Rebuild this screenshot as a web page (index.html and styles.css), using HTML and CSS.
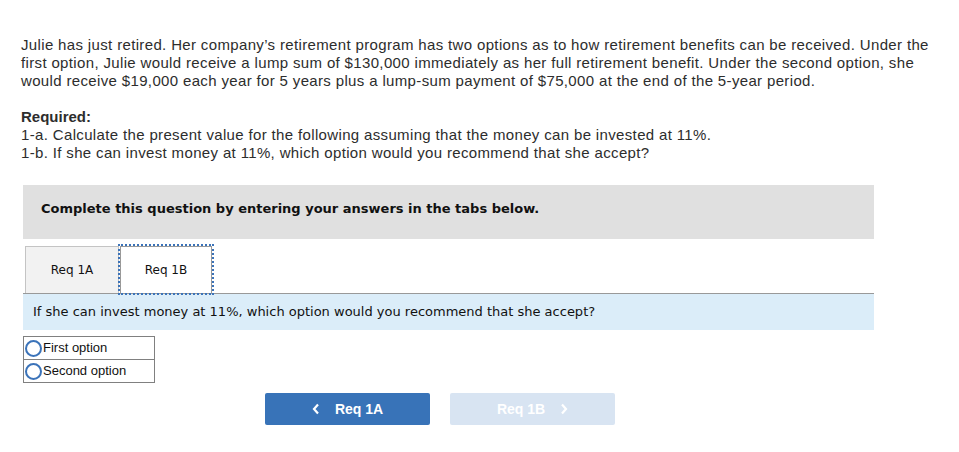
FILE: index.html
```html
<!DOCTYPE html>
<html>
<head>
<meta charset="utf-8">
<link rel="stylesheet" href="styles.css">
</head>
<body>
<div class="page">
  <p class="intro">Julie has just retired. Her company’s retirement program has two options as to how retirement benefits can be received. Under the first option, Julie would receive a lump sum of $130,000 immediately as her full retirement benefit. Under the second option, she would receive $19,000 each year for 5 years plus a lump-sum payment of $75,000 at the end of the 5-year period.</p>
  <p class="req"><strong>Required:</strong><br>1-a. Calculate the present value for the following assuming that the money can be invested at 11%.<br>1-b. If she can invest money at 11%, which option would you recommend that she accept?</p>

  <div class="question">
    <div class="banner">Complete this question by entering your answers in the tabs below.</div>
    <div class="tabs">
      <div class="tab">Req 1A</div>
      <div class="tab active">Req 1B</div>
    </div>
    <div class="panel">If she can invest money at 11%, which option would you recommend that she accept?</div>
    <div class="options">
      <div class="option"><span class="radio"></span>First option</div>
      <div class="option"><span class="radio"></span>Second option</div>
    </div>
    <div class="nav">
      <div class="btn prev"><svg class="chev" width="8" height="12" viewBox="0 0 8 12"><path d="M6 1.5 L2 6 L6 10.5" fill="none" stroke="#fff" stroke-width="2.2"/></svg><span>Req 1A</span></div>
      <div class="btn next disabled"><span>Req 1B</span><svg class="chev" width="8" height="12" viewBox="0 0 8 12"><path d="M2 1.5 L6 6 L2 10.5" fill="none" stroke="#fff" stroke-width="2.2"/></svg></div>
    </div>
  </div>
</div>
</body>
</html>
```

FILE: styles.css
```css
html, body {
  margin: 0;
  padding: 0;
  background: #fff;
}
.page {
  padding: 36px 0 0 21px;
  width: 920px;
  font-family: "Liberation Sans", Arial, sans-serif;
  font-size: 15px;
  line-height: 18px;
  color: #2d2d2d;
}
.page p {
  margin: 0 0 18px 0;
  letter-spacing: 0.35px;
}
.page strong {
  font-weight: bold;
  letter-spacing: 0;
}
.question {
  margin: 23px 0 0 2px;
  width: 851px;
}
.banner {
  background: #e0e0e0;
  height: 54px;
  box-sizing: border-box;
  padding: 16px 18px 0 18px;
  font-family: "DejaVu Sans", Verdana, sans-serif;
  font-weight: bold;
  font-size: 13px;
  line-height: 16px;
  color: #111;
}
.tabs {
  display: flex;
  align-items: flex-end;
  margin-top: 7px;
  padding-left: 2px;
  height: 47px;
}
.tab {
  box-sizing: border-box;
  width: 94px;
  height: 47px;
  border: 1px solid #c4c4c4;
  border-bottom: none;
  background: #f2f2f2;
  display: flex;
  align-items: center;
  justify-content: center;
  font-family: "DejaVu Sans", Verdana, sans-serif;
  font-size: 12px;
  color: #111;
}
.tab.active {
  background: #fff;
  border-color: #999;
  width: 92px;
  margin-left: 1px;
  outline: 2px dotted #3b73b9;
  outline-offset: 0;
  position: relative;
  z-index: 1;
}
.panel {
  border-top: 1px solid #999;
  background: #dbedf9;
  height: 37px;
  box-sizing: border-box;
  padding: 10px 0 0 10px;
  font-family: "DejaVu Sans", Verdana, sans-serif;
  font-size: 13px;
  line-height: 16px;
  color: #111;
}
.options {
  margin-top: 6px;
  width: 132px;
  border: 1px solid #808080;
  box-sizing: border-box;
}
.option {
  display: flex;
  align-items: center;
  height: 22px;
  font-family: "Liberation Sans", Arial, sans-serif;
  font-size: 13px;
  color: #111;
}
.option + .option {
  border-top: 1px solid #808080;
}
.radio {
  box-sizing: border-box;
  width: 17px;
  height: 17px;
  border: 2px solid #3b73b9;
  border-radius: 50%;
  margin: 0 1px 0 1px;
}
.nav {
  display: flex;
  gap: 20px;
  margin: 10px 0 0 242px;
}
.btn {
  width: 165px;
  height: 32px;
  border-radius: 2px;
  display: flex;
  align-items: center;
  justify-content: center;
  gap: 15px;
  font-family: "Liberation Sans", Arial, sans-serif;
  font-weight: bold;
  font-size: 14px;
  color: #fff;
  background: #3873b8;
}
.btn.disabled {
  background: #d8e4f2;
}
.chev {
  display: block;
}
```
